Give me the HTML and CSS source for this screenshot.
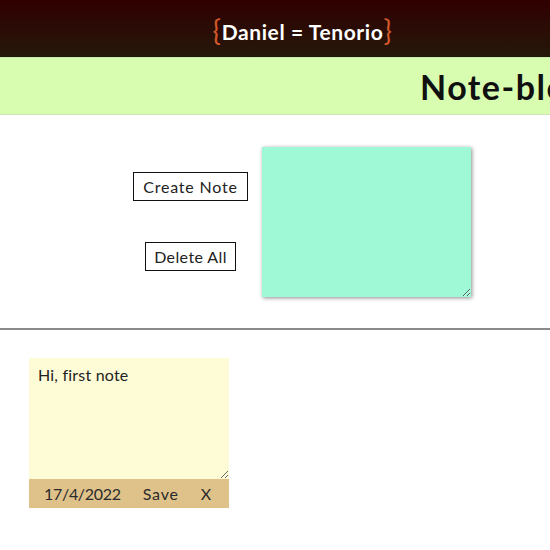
FILE: index.html
```html
<!DOCTYPE html>
<html>
<head>
<meta charset="utf-8">
<link rel="stylesheet" href="styles.css">
</head>
<body>
<header class="top">
  <h1 class="brand"><span class="brace">{</span>Daniel = Tenorio<span class="brace">}</span></h1>
</header>
<div class="banner"><h2 class="banner-title">Note-block</h2></div>
<section class="editor">
  <div class="actions">
    <button class="btn">Create Note</button>
    <button class="btn btn-narrow">Delete All</button>
  </div>
  <textarea class="draft"></textarea>
</section>
<hr class="divider">
<section class="notes">
  <div class="note">
    <textarea class="note-text" spellcheck="false">Hi, first note</textarea>
    <div class="note-foot">
      <span>17/4/2022</span>
      <span>Save</span>
      <span>X</span>
    </div>
  </div>
</section>
</body>
</html>
```
FILE: styles.css
```css
html, body {
  margin: 0;
  padding: 0;
  background: #ffffff;
  font-family: "Lato", "DejaVu Sans", sans-serif;
  overflow: hidden;
}
.top {
  height: 57px;
  background: linear-gradient(#300000, #25180b);
  display: flex;
  align-items: center;
  justify-content: center;
  padding-left: 55px;
}
.brand {
  margin: 0;
  color: #ffffff;
  font-size: 21px;
  font-weight: 700;
  letter-spacing: 0.6px;
}
.brace {
  color: #d2582a;
  font-weight: 400;
  font-size: 28px;
  position: relative;
  top: 1px;
}
.banner {
  height: 56px;
  background: #d8fdb0;
  border-top: 1px solid #c6ecaa;
  border-bottom: 1px solid #cde3c0;
  display: flex;
  align-items: center;
  padding-left: 420px;
  white-space: nowrap;
}
.banner-title {
  margin: 0;
  font-size: 34px;
  font-weight: 700;
  letter-spacing: 1.5px;
  color: #101010;
}
.editor {
  height: 213px;
  display: flex;
  align-items: flex-start;
  padding-left: 133px;
}
.actions {
  width: 115px;
  display: flex;
  flex-direction: column;
  align-items: center;
  gap: 41px;
  padding-top: 57px;
  margin-right: 14px;
}
.btn {
  background: #ffffff;
  border: 1px solid #111111;
  border-radius: 0;
  font-family: "Lato", "DejaVu Sans", sans-serif;
  font-size: 16px;
  letter-spacing: 0.8px;
  color: #222;
  padding: 3px 9px;
  height: 29px;
}
.btn-narrow {
  letter-spacing: 0.4px;
  padding: 3px 8px;
}
.draft {
  margin-top: 32px;
  width: 209px;
  height: 150px;
  box-sizing: border-box;
  background: #9ff9d6;
  border: none;
  box-shadow: 1px 1px 4px rgba(0,0,0,0.45);
  outline: none;
}
.divider {
  margin: 0;
  border: none;
  height: 2px;
  background: #8a8a8a;
}
.notes {
  padding: 28px 29px;
}
.note {
  width: 200px;
}
.note-text {
  display: block;
  width: 200px;
  height: 121px;
  box-sizing: border-box;
  background: #fefcd6;
  border: none;
  outline: none;
  margin: 0;
  padding: 7px 9px;
  font-family: "Lato", "DejaVu Sans", sans-serif;
  font-size: 16px;
  letter-spacing: 0.2px;
  color: #222;
}
.note-foot {
  height: 29px;
  background: #dfc28a;
  display: flex;
  align-items: center;
  padding-left: 15px;
  gap: 22px;
  font-size: 16px;
  color: #2a2a2a;
}
.note-foot span:first-child {
  letter-spacing: -0.3px;
}
.note-foot span:nth-child(2) {
  letter-spacing: 0.8px;
}
```
